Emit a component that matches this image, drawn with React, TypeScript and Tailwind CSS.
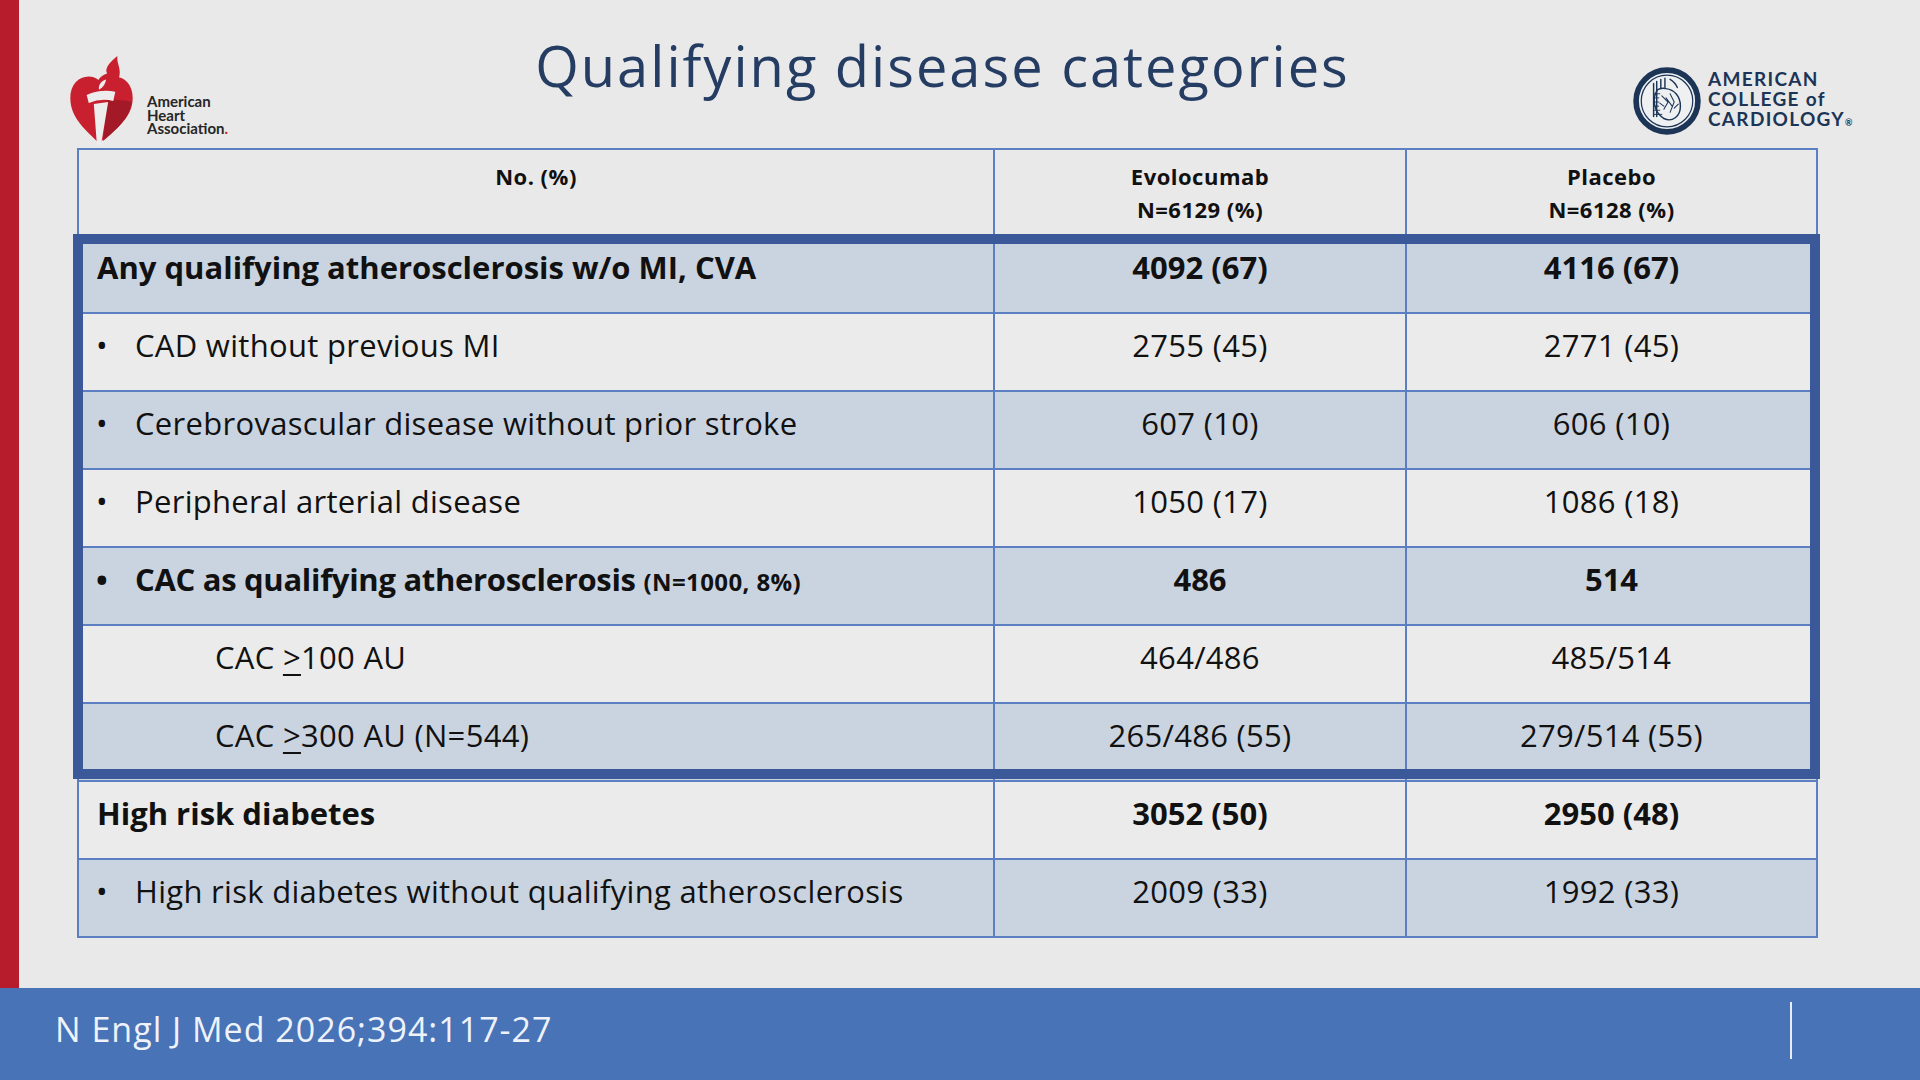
import * as React from "react";

type RowKind = "head" | "bullet" | "sub";

interface TableRow {
  kind: RowKind;
  label: React.ReactNode;
  bold?: boolean;
  evo: string;
  pla: string;
  shaded: boolean;
}

const ge = (
  <span className="underline decoration-2 underline-offset-[5px]">&gt;</span>
);

const rows: TableRow[] = [
  { kind: "head", label: "Any qualifying atherosclerosis w/o MI, CVA", bold: true, evo: "4092 (67)", pla: "4116 (67)", shaded: true },
  { kind: "bullet", label: "CAD without previous MI", evo: "2755 (45)", pla: "2771 (45)", shaded: false },
  { kind: "bullet", label: "Cerebrovascular disease without prior stroke", evo: "607 (10)", pla: "606 (10)", shaded: true },
  { kind: "bullet", label: "Peripheral arterial disease", evo: "1050 (17)", pla: "1086 (18)", shaded: false },
  {
    kind: "bullet",
    label: (
      <span className="font-bold tracking-[-0.3px]">
        CAC as qualifying atherosclerosis{" "}
        <span className="text-[24px] tracking-[0.4px]">(N=1000, 8%)</span>
      </span>
    ),
    bold: true,
    evo: "486",
    pla: "514",
    shaded: true,
  },
  { kind: "sub", label: <>CAC {ge}100 AU</>, evo: "464/486", pla: "485/514", shaded: false },
  { kind: "sub", label: <>CAC {ge}300 AU (N=544)</>, evo: "265/486 (55)", pla: "279/514 (55)", shaded: true },
  { kind: "head", label: "High risk diabetes", bold: true, evo: "3052 (50)", pla: "2950 (48)", shaded: false },
  { kind: "bullet", label: "High risk diabetes without qualifying atherosclerosis", evo: "2009 (33)", pla: "1992 (33)", shaded: true },
];

function AhaLogo() {
  return (
    <div className="flex items-start">
      <svg width="68" height="90" viewBox="0 0 64 88" className="shrink-0">
        {/* heart */}
        <path
          d="M30 86 C18 74 2 62 2 42 C2 29 10 21 20 21 C26 21 30 24 32 28 C34 24 38 21 45 21 C55 21 63 29 63 42 C63 62 45 74 30 86 Z"
          fill="#c8202f"
        />
        {/* shaded right side */}
        <path d="M38 44 L34 84 C46 74 60 62 62 46 C56 44 46 44 38 44 Z" fill="#a31927" />
        {/* torch */}
        <path d="M18 39 Q32 33 46 36 L44 45 Q32 42 20 47 Z" fill="#ededed" />
        <path d="M25 48 L39 46 L32 88 L28 88 Z" fill="#ededed" />
        {/* flame */}
        <path
          d="M29 35 C25 27 31 20 38 18 C35 13 41 7 48 1 C47 9 53 14 49 24 C46 30 40 33 33 35 Z"
          fill="#c8202f"
        />
        <path d="M30 34 C29 29 33 25 37 24 C36 28 35 31 30 34 Z" fill="#ededed" />
      </svg>
      <div className="ml-[12px] mt-[40px] w-[90px] font-['Lato',sans-serif] text-[15px] leading-[13.5px] font-bold text-[#262626]">
        <div>American</div>
        <div>Heart</div>
        <div>
          Association<span className="text-[#c8202f]">.</span>
        </div>
      </div>
    </div>
  );
}

function AccLogo() {
  return (
    <div className="flex w-[222px] items-start">
      <svg width="68" height="68" viewBox="0 0 66 66" className="shrink-0">
        <circle cx="33" cy="33" r="30" fill="#eef0f2" stroke="#1c3557" strokeWidth="5.5" />
        <circle cx="33" cy="33" r="25" fill="none" stroke="#1c3557" strokeWidth="1.2" />
        <g stroke="#1c3557" fill="none" strokeWidth="1.4" strokeLinecap="round">
          <path d="M20 16 L20 48 M23 14 L23 48 M27 12 L27 21 M31 11 L31 20 M36 12 Q41 15 43 20" />
          <path d="M24 22 C18 30 20 44 30 50 C38 54 46 48 46 38 C46 28 40 22 32 21 C28 20 26 21 24 22 Z" />
          <path d="M28 28 L34 34 L30 41 M36 26 L40 34 L36 44 M32 30 L38 38 M26 35 L30 38 M40 40 L44 36" strokeWidth="1" />
          <path d="M20 26 L26 26 M20 30 L25 30 M20 34 L25 34 M20 38 L25 38 M20 42 L26 42 M20 46 L28 46" strokeWidth="0.9" />
        </g>
      </svg>
      <div className="ml-[7px] pt-[2px] font-['Lato',sans-serif] text-[19px] leading-[20px] font-bold tracking-[1.3px] text-[#1c3557]">
        <div>AMERICAN</div>
        <div>COLLEGE of</div>
        <div>
          CARDIOLOGY<span className="text-[9px] align-baseline">®</span>
        </div>
      </div>
    </div>
  );
}

function LabelCell({ row }: { row: TableRow }) {
  if (row.kind === "head") {
    return <span className="pl-[18px] font-bold tracking-normal">{row.label}</span>;
  }
  if (row.kind === "sub") {
    return <span className="pl-[136px]">{row.label}</span>;
  }
  return (
    <span className={`flex pl-[17px] ${row.bold ? "font-bold" : ""}`}>
      <span className="w-[39px]">•</span>
      <span>{row.label}</span>
    </span>
  );
}

export default function App() {
  return (
    <div className="flex h-[1080px] w-[1920px] flex-col overflow-hidden bg-[#e9e9e9] font-['Open_Sans',sans-serif] text-[#111111]">
      <div className="flex flex-1">
        <div className="w-[19px] shrink-0 bg-[#b71c2c]" />

        <div className="flex flex-1 flex-col">
          {/* Header */}
          <div className="flex h-[148px] items-start">
            <div className="ml-[48px] mt-[55px]">
              <AhaLogo />
            </div>
            <div className="flex-1 pl-[15px] pt-[37px] text-center">
              <h1 className="text-[56px] leading-none font-medium tracking-[2px] text-[#253c63]">
                Qualifying disease categories
              </h1>
            </div>
            <div className="mr-[65px] mt-[67px]">
              <AccLogo />
            </div>
          </div>

          {/* Table */}
          <div className="relative ml-[58px] w-[1741px]">
            <div className="grid grid-cols-[916px_412px_411px] border-l-2 border-t-2 border-[#5b7fc2]">
              <div className="flex h-[86px] justify-center border-b-2 border-r-2 border-[#5b7fc2] pt-[10px] text-[22px] leading-[33px] font-bold tracking-[0.5px]">
                No. (%)
              </div>
              <div className="flex h-[86px] flex-col items-center border-b-2 border-r-2 border-[#5b7fc2] pt-[10px] text-[22px] leading-[33px] font-bold tracking-[0.5px]">
                <span>Evolocumab</span>
                <span>N=6129 (%)</span>
              </div>
              <div className="flex h-[86px] flex-col items-center border-b-2 border-r-2 border-[#5b7fc2] pt-[10px] text-[22px] leading-[33px] font-bold tracking-[0.5px]">
                <span>Placebo</span>
                <span>N=6128 (%)</span>
              </div>

              {rows.map((row, i) => {
                const bg = row.shaded ? "bg-[#cad4e0]" : "bg-[#ebebeb]";
                const weight = row.bold ? "font-bold tracking-normal" : "tracking-[0.3px]";
                return (
                  <React.Fragment key={i}>
                    <div className={`h-[78px] border-b-2 border-r-2 border-[#5b7fc2] pt-[13px] text-[31px] leading-[36px] tracking-[0.3px] ${bg}`}>
                      <LabelCell row={row} />
                    </div>
                    <div className={`h-[78px] border-b-2 border-r-2 border-[#5b7fc2] pt-[13px] text-center text-[31px] leading-[36px] ${bg} ${weight}`}>
                      {row.evo}
                    </div>
                    <div className={`h-[78px] border-b-2 border-r-2 border-[#5b7fc2] pt-[13px] text-center text-[31px] leading-[36px] ${bg} ${weight}`}>
                      {row.pla}
                    </div>
                  </React.Fragment>
                );
              })}
            </div>

            {/* highlight frame over the atherosclerosis block */}
            <div className="pointer-events-none absolute left-[-4px] top-[86px] h-[545px] w-[1747px] border-[10px] border-[#3b5899]" />
          </div>
        </div>
      </div>

      {/* Footer */}
      <div className="flex h-[92px] shrink-0 items-start bg-[#4873b6]">
        <div className="pl-[55px] pt-[24px] text-[34px] leading-none tracking-[1px] text-[#eef2fa]">
          N Engl J Med 2026;394:117-27
        </div>
        <div className="ml-auto mr-[128px] mt-[14px] h-[57px] w-[2px] bg-[#e8eef8]" />
      </div>
    </div>
  );
}
